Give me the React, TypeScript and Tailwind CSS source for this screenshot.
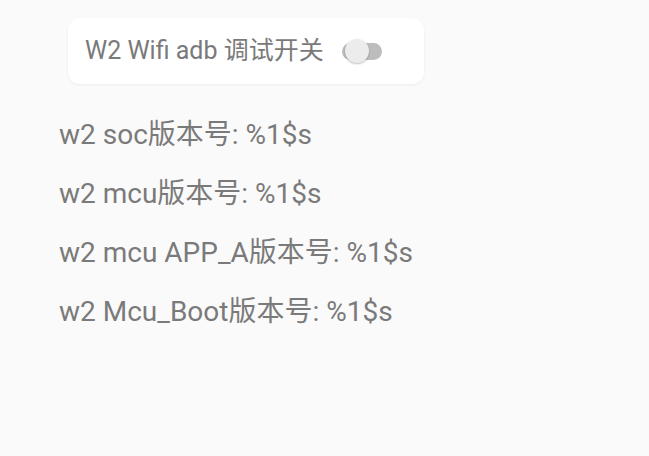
const versions = [
  "w2 soc版本号: %1$s",
  "w2 mcu版本号: %1$s",
  "w2 mcu APP_A版本号: %1$s",
  "w2 Mcu_Boot版本号: %1$s",
];

export default function App() {
  return (
    <div
      className="w-[649px] h-[456px] bg-[#fafafa] overflow-hidden"
      style={{ fontFamily: "Roboto, 'Noto Sans CJK SC', sans-serif" }}
    >
      <div className="pt-[18px] pl-[68px]">
        <div className="w-[356px] h-[66px] bg-white rounded-[12px] shadow-[0_1px_3px_rgba(0,0,0,0.06)] flex items-center pl-[17px]">
          <span className="text-[25px] text-[#7a7a7a]">W2 Wifi adb 调试开关</span>
          <div className="relative ml-[18px] w-[41px] h-[24px] flex items-center">
            <div className="w-[40px] h-[17px] rounded-full bg-[#bdbdbd]" />
            <div className="absolute left-[3px] top-0 w-[24px] h-[24px] rounded-full bg-[#ececec] shadow-[0_1px_2px_rgba(0,0,0,0.25)]" />
          </div>
        </div>
      </div>
      <div className="pl-[59px] pt-[31px] flex flex-col gap-[19px]">
        {versions.map((v) => (
          <div key={v} className="text-[28px] leading-[40px] text-[#7a7a7a]">
            {v}
          </div>
        ))}
      </div>
    </div>
  );
}
